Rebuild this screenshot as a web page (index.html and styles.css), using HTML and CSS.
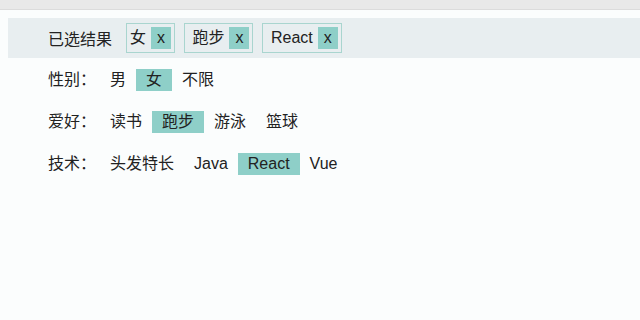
FILE: index.html
```html
<!DOCTYPE html>
<html lang="zh-CN">
<head>
    <meta charset="UTF-8">
    <title>筛选条件</title>
    <link rel="stylesheet" href="styles.css">
</head>
<body>
    <div class="topbar"></div>
    <div class="wrap">
        <div class="selected">
            <span class="title">已选结果</span>
            <span class="tag"><span class="text">女</span><span class="close">x</span></span>
            <span class="tag"><span class="text">&nbsp;跑步</span><span class="close">x</span></span>
            <span class="tag"><span class="text">&nbsp;React</span><span class="close">x</span></span>
        </div>
        <ul class="filter">
            <li>
                <span class="label">性别：</span>
                <span class="opt">男</span>
                <span class="opt current">女</span>
                <span class="opt">不限</span>
            </li>
            <li>
                <span class="label">爱好：</span>
                <span class="opt">读书</span>
                <span class="opt current">跑步</span>
                <span class="opt">游泳</span>
                <span class="opt">篮球</span>
            </li>
            <li>
                <span class="label">技术：</span>
                <span class="opt">头发特长</span>
                <span class="opt">Java</span>
                <span class="opt current">React</span>
                <span class="opt">Vue</span>
            </li>
        </ul>
    </div>
</body>
</html>
```

FILE: styles.css
```css
* {
    margin: 0;
    padding: 0;
}
ul, li {
    list-style: none;
}
body {
    background-color: #fbfdfd;
    font-family: "Liberation Sans", "Noto Sans CJK SC", sans-serif;
    font-size: 16px;
    color: #222;
}
.topbar {
    height: 9px;
    background-color: #e9e9e9;
    border-bottom: 1px solid #dcdcdc;
}
.wrap {
    margin: 0 0 0 8px;
}
.selected {
    display: flex;
    align-items: center;
    height: 40px;
    margin-top: 8px;
    padding-left: 40px;
    background-color: #e8eef0;
}
.title {
    margin-right: 14px;
}
.tag {
    display: flex;
    align-items: center;
    margin-right: 9px;
    padding: 3px;
    line-height: 22px;
    border: 1px solid #a9d5cf;
}
.tag .text {
    padding-right: 5px;
}
.tag .close {
    padding: 0 6px;
    background-color: #8ecfc8;
    cursor: pointer;
}
.filter {
    padding: 11px 0 0 40px;
}
.filter li {
    display: flex;
    margin-bottom: 20px;
    line-height: 22px;
}
.label {
    width: 52px;
}
.opt {
    padding: 0 10px;
    cursor: pointer;
}
.opt.current {
    background-color: #8ecfc8;
}
```
